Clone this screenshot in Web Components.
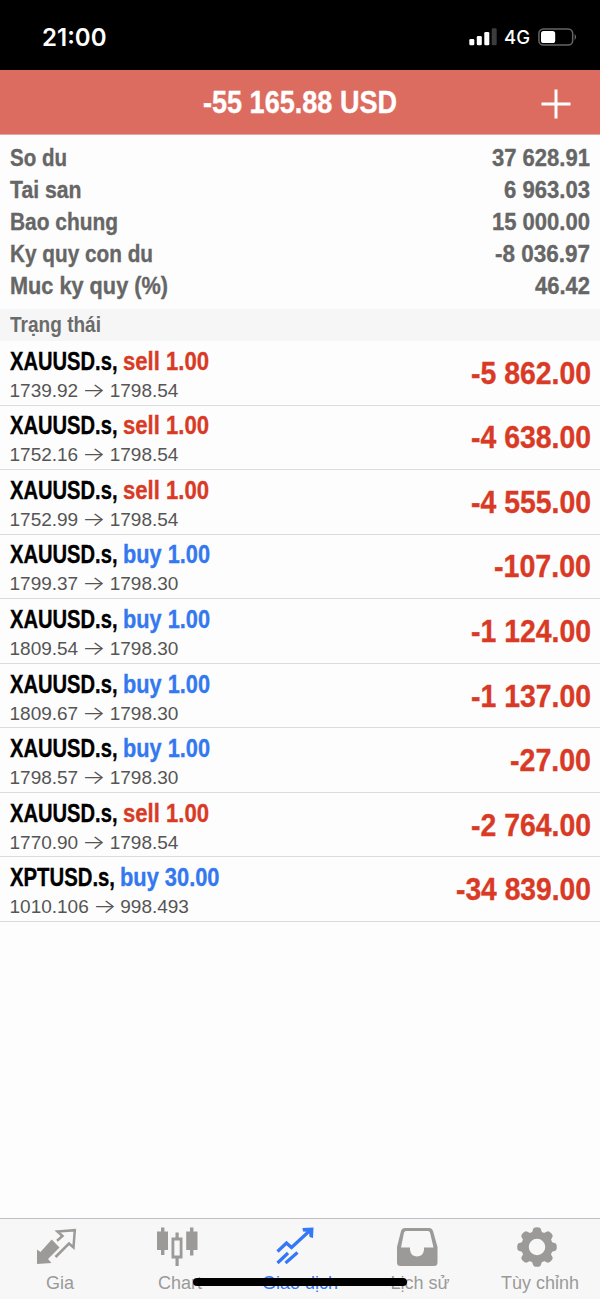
<!DOCTYPE html>
<html lang="vi">
<head>
<meta charset="utf-8">
<meta name="viewport" content="width=device-width">
<title>Giao dịch</title>
<style>
  body {
    margin: 0;
    background: #fff;
    font-family: "Liberation Sans", Arial, sans-serif;
  }
</style>
</head>
<body>
<trade-app></trade-app>

<script>
// Bold text squeezed horizontally to the width given in px.
class CondensedText extends HTMLElement {
  constructor() {
    super();
    this.attachShadow({ mode: "open" });
  }

  static get styles() {
    return /* css */`
      :host {
        display: block;
        flex: none;
        font-weight: bold;
      }

      span {
        display: block;
        width: max-content;
        white-space: pre;
        transform-origin: 0 50%;
        -webkit-text-stroke: var(--stroke, 0.35px);
      }
    `;
  }

  connectedCallback() {
    this.shadowRoot.innerHTML = /* html */`
    <style>${CondensedText.styles}</style>
    <span><slot></slot></span>`;
    const span = this.shadowRoot.querySelector("span");
    const width = Number(this.getAttribute("width"));
    const natural = span.getBoundingClientRect().width;
    this.style.width = `${width}px`;
    span.style.transform = `scaleX(${width / natural})`;
  }
}

class StatusBar extends HTMLElement {
  constructor() {
    super();
    this.attachShadow({ mode: "open" });
  }

  static get styles() {
    return /* css */`
      :host {
        --stroke: 0;
        display: flex;
        justify-content: space-between;
        align-items: center;
        box-sizing: border-box;
        height: 70px;
        padding: 4px 22px 0 42px;
        background: #000;
        color: #fff;
        font-family: Inter, "Liberation Sans", sans-serif;
      }

      .time {
        font-size: 24px;
      }

      .time condensed-text {
        font-weight: 600;
      }

      .right {
        display: flex;
        align-items: center;
      }

      .network {
        margin: 0 8px 0 7px;
        font-size: 18.5px;
      }

      .network condensed-text {
        font-weight: 500;
      }

      svg {
        display: block;
      }
    `;
  }

  connectedCallback() {
    this.shadowRoot.innerHTML = /* html */`
    <style>${StatusBar.styles}</style>
    <div class="time"><condensed-text width="64.5">21:00</condensed-text></div>
    <div class="right">
      <svg width="28" height="18" viewBox="0 0 28 18" fill="#fff">
        <rect x="0.3" y="11" width="5" height="6.2" rx="1.3"/>
        <rect x="7.8" y="8" width="5" height="9.2" rx="1.3"/>
        <rect x="15.3" y="4" width="5" height="13.2" rx="1.3"/>
        <rect x="22.7" y="0.3" width="5" height="16.9" rx="1.3" fill="#3c3c3c"/>
      </svg>
      <div class="network"><condensed-text width="26">4G</condensed-text></div>
      <svg width="40" height="18" viewBox="0 0 40 18">
        <rect x="0.9" y="0.9" width="33.8" height="16.2" rx="4.6" fill="none" stroke="#666" stroke-width="1.5"/>
        <rect x="3" y="3" width="14.2" height="12" rx="2.6" fill="#fff"/>
        <path d="M36.7 6 Q39.3 9 36.7 12Z" fill="#777"/>
      </svg>
    </div>`;
  }
}

class TitleBar extends HTMLElement {
  constructor() {
    super();
    this.attachShadow({ mode: "open" });
  }

  static get styles() {
    return /* css */`
      :host {
        display: grid;
        grid-template-columns: 1fr auto 1fr;
        align-items: center;
        box-sizing: border-box;
        height: 65px;
        padding: 0 29px;
        border-bottom: 1px solid #e3a7a1;
        background: #dd6c60;
        color: #fff;
        font-size: 30.5px;
      }

      .title {
        grid-column: 2;
        padding-top: 1px;
      }

      svg {
        justify-self: end;
        margin-top: 3px;
      }
    `;
  }

  connectedCallback() {
    this.shadowRoot.innerHTML = /* html */`
    <style>${TitleBar.styles}</style>
    <div class="title"><slot></slot></div>
    <svg width="30" height="30" viewBox="0 0 30 30">
      <path d="M15 0.5V29.5M0.5 15H29.5" stroke="#fff" stroke-width="3"/>
    </svg>`;
  }
}

class SummaryRow extends HTMLElement {
  constructor() {
    super();
    this.attachShadow({ mode: "open" });
  }

  static get styles() {
    return /* css */`
      :host {
        display: flex;
        justify-content: space-between;
        padding: 0 10.5px 0 9.5px;
        color: #666;
        font-size: 24.5px;
        line-height: 32px;
      }
    `;
  }

  connectedCallback() {
    this.shadowRoot.innerHTML = /* html */`
    <style>${SummaryRow.styles}</style>
    <slot name="label"></slot>
    <slot name="value"></slot>`;
  }
}

class SectionHeader extends HTMLElement {
  constructor() {
    super();
    this.attachShadow({ mode: "open" });
  }

  connectedCallback() {
    this.shadowRoot.innerHTML = /* html */`
    <style>
      :host {
        --stroke: 0;
        display: block;
        height: 32px;
        padding-left: 9.5px;
        background: #f6f6f6;
        color: #6b6b6b;
        font-size: 21.5px;
        line-height: 33px;
      }
    </style>
    <slot></slot>`;
  }
}

class TradePosition extends HTMLElement {
  constructor() {
    super();
    this.attachShadow({ mode: "open" });
  }

  static get styles() {
    return /* css */`
      :host {
        display: flex;
        justify-content: space-between;
        align-items: center;
        box-sizing: border-box;
        height: 64.55px;
        padding: 0 9.5px;
        border-bottom: 1px solid #dcdcdc;
      }

      .order {
        display: flex;
        gap: 5.5px;
        margin-top: 4px;
        font-size: 25.5px;
        line-height: 30px;
      }

      .sell {
        color: #d93a26;
      }

      .buy {
        color: #3478f0;
      }

      .prices {
        display: flex;
        gap: 4px;
        height: 28px;
        color: #555;
        font-size: 19px;
        line-height: 29px;
      }

      .arrow {
        --stroke: 0;
        font-family: Inter, "DejaVu Sans", sans-serif;
      }

      .arrow condensed-text {
        font-weight: 300;
      }

      .profit {
        margin-top: 1px;
        color: #d93a26;
        font-size: 30.5px;
      }
    `;
  }

  connectedCallback() {
    const { symbol, side, volume, open, price, profit } = this.dataset;
    const [symbolWidth, orderWidth, profitWidth] = this.dataset.widths.split(" ");
    this.shadowRoot.innerHTML = /* html */`
    <style>${TradePosition.styles}</style>
    <div>
      <div class="order">
        <condensed-text width="${symbolWidth}">${symbol},</condensed-text>
        <condensed-text class="${side}" width="${orderWidth}">${side} ${volume}</condensed-text>
      </div>
      <div class="prices">
        <span>${open}</span>
        <span class="arrow"><condensed-text width="23.5">→</condensed-text></span>
        <span>${price}</span>
      </div>
    </div>
    <condensed-text class="profit" width="${profitWidth}">${profit}</condensed-text>`;
  }
}

class TabItem extends HTMLElement {
  constructor() {
    super();
    this.attachShadow({ mode: "open" });
  }

  static get styles() {
    return /* css */`
      :host {
        display: flex;
        flex-direction: column;
        align-items: center;
        color: #9b9a99;
        font-size: 18px;
        line-height: 22px;
      }

      :host([active]) {
        color: #3478f6;
      }

      .icon {
        height: 44px;
        margin: 7px 6px 2px 0;
      }
    `;
  }

  connectedCallback() {
    this.shadowRoot.innerHTML = /* html */`
    <style>${TabItem.styles}</style>
    <div class="icon"><slot name="icon"></slot></div>
    <slot></slot>`;
  }
}

class TabBar extends HTMLElement {
  constructor() {
    super();
    this.attachShadow({ mode: "open" });
  }

  static get styles() {
    return /* css */`
      :host {
        display: grid;
        grid-template-columns: repeat(5, 1fr);
        position: relative;
        box-sizing: border-box;
        height: 81px;
        border-top: 1px solid #bdbdc2;
        background: #f7f7f7;
      }

      .home {
        position: absolute;
        left: 193px;
        bottom: 13px;
        width: 214px;
        height: 8px;
        border-radius: 4px;
        background: #000;
      }

      svg {
        display: block;
      }
    `;
  }

  connectedCallback() {
    this.shadowRoot.innerHTML = /* html */`
    <style>${TabBar.styles}</style>
    <tab-item>
      <svg slot="icon" width="44" height="44" viewBox="0 0 44 44">
        <path d="M16.700 13.500 L24.500 21.500 L13 33 L16.500 37 L2 38 L2 23.500 L5.500 26Z" fill="#9b9a99"/>
        <path d="M20.500 31 L34 17.500 L38.500 21.500 L39.800 4.200 L22.500 5.500 L27.500 10 L22 14.800" fill="none" stroke="#9b9a99" stroke-width="2.500"/>
      </svg>
      Gia
    </tab-item>
    <tab-item>
      <svg slot="icon" width="44" height="44" viewBox="0 0 44 44" fill="#9b9a99">
        <path d="M6 1.500h3.400v4h3.600v18.500H9.400v5H6v-5H2V5.500h4Z"/>
        <path d="M35 1.500h3.400v4H42.500v18.500h-4.100v5.500H35v-5.500h-3.800V5.500H35Z"/>
        <path fill-rule="evenodd" d="M20.500 6.500h3.200v5H27.500v21H23.700v7.500h-3.200v-7.500h-4v-21h4ZM19.300 14.500v15h5.400v-15Z"/>
      </svg>
      Chart
    </tab-item>
    <tab-item active>
      <svg slot="icon" width="44" height="44" viewBox="0 0 44 44" fill="none" stroke="#3478f6" stroke-width="3.200">
        <path d="M2.500 25.500 L11.500 17 L16.500 21.500 L35.500 4 M2.500 37 L13 27 M10.500 37 L22.500 26.500"/>
        <path d="M27.500 2 L38.500 1.500 L38 12 L34.500 11 L34 6 L28 5.500Z" fill="#3478f6" stroke="none"/>
      </svg>
      Giao dịch
    </tab-item>
    <tab-item>
      <svg slot="icon" width="44" height="44" viewBox="0 0 44 44">
        <path fill-rule="evenodd" fill="#9b9a99" d="M10 2H34Q37 2 38 5L42.500 21V36.500Q42.500 40 39 40H5.500Q2 40 2 36.500V21L6 5Q7 2 10 2ZM11 5Q9.500 5 9 6.500L6 21.500H15V24Q16 30.500 22 30.500T29 24V21.500H38.500L35 6.500Q34.500 5 33 5Z"/>
      </svg>
      Lịch sử
    </tab-item>
    <tab-item>
      <svg slot="icon" class="gear" width="44" height="44" viewBox="0 0 44 44"></svg>
      Tùy chỉnh
    </tab-item>
    <div class="home"></div>`;
    this.shadowRoot.querySelector(".gear").innerHTML = TabBar.gear;
  }

  // Eight rounded teeth around a ring.
  static get gear() {
    const teeth = [0, 45, 90, 135, 180, 225, 270, 315].map(angle =>
      `<path transform="rotate(${angle} 22 21)" d="M15 9 Q17.500 7 18 3.500 Q18.300 1.200 22 1.200 T26 3.500 Q26.500 7 29 9Z"/>`);
    return `<g fill="#9b9a99">${teeth.join("")}</g>
      <circle cx="22" cy="21" r="12" fill="none" stroke="#9b9a99" stroke-width="7.500"/>`;
  }
}

class TradeApp extends HTMLElement {
  constructor() {
    super();
    this.attachShadow({ mode: "open" });
  }

  static get styles() {
    return /* css */`
      :host {
        display: flex;
        flex-direction: column;
        width: 600px;
        height: 1299px;
        background: #fdfdfd;
      }

      .summary {
        padding: 7px 0;
      }

      .positions {
        flex: 1;
      }
    `;
  }

  static get summary() {
    return [
      ["So du", 57, "37 628.91", 98],
      ["Tai san", 71.5, "6 963.03", 86],
      ["Bao chung", 108, "15 000.00", 98],
      ["Ky quy con du", 143, "-8 036.97", 95],
      ["Muc ky quy (%)", 158, "46.42", 55]
    ];
  }

  static get positions() {
    return [
      ["XAUUSD.s", "sell", "1.00", "1739.92", "1798.54", "-5 862.00", "107.5 86 120"],
      ["XAUUSD.s", "sell", "1.00", "1752.16", "1798.54", "-4 638.00", "107.5 86 120"],
      ["XAUUSD.s", "sell", "1.00", "1752.99", "1798.54", "-4 555.00", "107.5 86 120"],
      ["XAUUSD.s", "buy", "1.00", "1799.37", "1798.30", "-107.00", "107.5 87 97"],
      ["XAUUSD.s", "buy", "1.00", "1809.54", "1798.30", "-1 124.00", "107.5 87 120"],
      ["XAUUSD.s", "buy", "1.00", "1809.67", "1798.30", "-1 137.00", "107.5 87 120"],
      ["XAUUSD.s", "buy", "1.00", "1798.57", "1798.30", "-27.00", "107.5 87 81"],
      ["XAUUSD.s", "sell", "1.00", "1770.90", "1798.54", "-2 764.00", "107.5 86 120"],
      ["XPTUSD.s", "buy", "30.00", "1010.106", "998.493", "-34 839.00", "105 99.5 135"]
    ];
  }

  connectedCallback() {
    const summary = TradeApp.summary.map(([label, labelWidth, value, valueWidth]) => /* html */`
      <summary-row>
        <condensed-text slot="label" width="${labelWidth}">${label}</condensed-text>
        <condensed-text slot="value" width="${valueWidth}">${value}</condensed-text>
      </summary-row>`);
    const positions = TradeApp.positions.map(([symbol, side, volume, open, price, profit, widths]) => /* html */`
      <trade-position data-symbol="${symbol}" data-side="${side}" data-volume="${volume}"
        data-open="${open}" data-price="${price}" data-profit="${profit}" data-widths="${widths}"></trade-position>`);
    this.shadowRoot.innerHTML = /* html */`
    <style>${TradeApp.styles}</style>
    <status-bar></status-bar>
    <title-bar><condensed-text width="194">-55 165.88 USD</condensed-text></title-bar>
    <div class="summary">${summary.join("")}</div>
    <section-header><condensed-text width="91">Trạng thái</condensed-text></section-header>
    <div class="positions">${positions.join("")}</div>
    <tab-bar></tab-bar>`;
  }
}

// Containers come first so that text is measured with its final styles.
customElements.define("trade-app", TradeApp);
customElements.define("status-bar", StatusBar);
customElements.define("title-bar", TitleBar);
customElements.define("summary-row", SummaryRow);
customElements.define("section-header", SectionHeader);
customElements.define("trade-position", TradePosition);
customElements.define("tab-item", TabItem);
customElements.define("tab-bar", TabBar);
customElements.define("condensed-text", CondensedText);
</script>
</body>
</html>
